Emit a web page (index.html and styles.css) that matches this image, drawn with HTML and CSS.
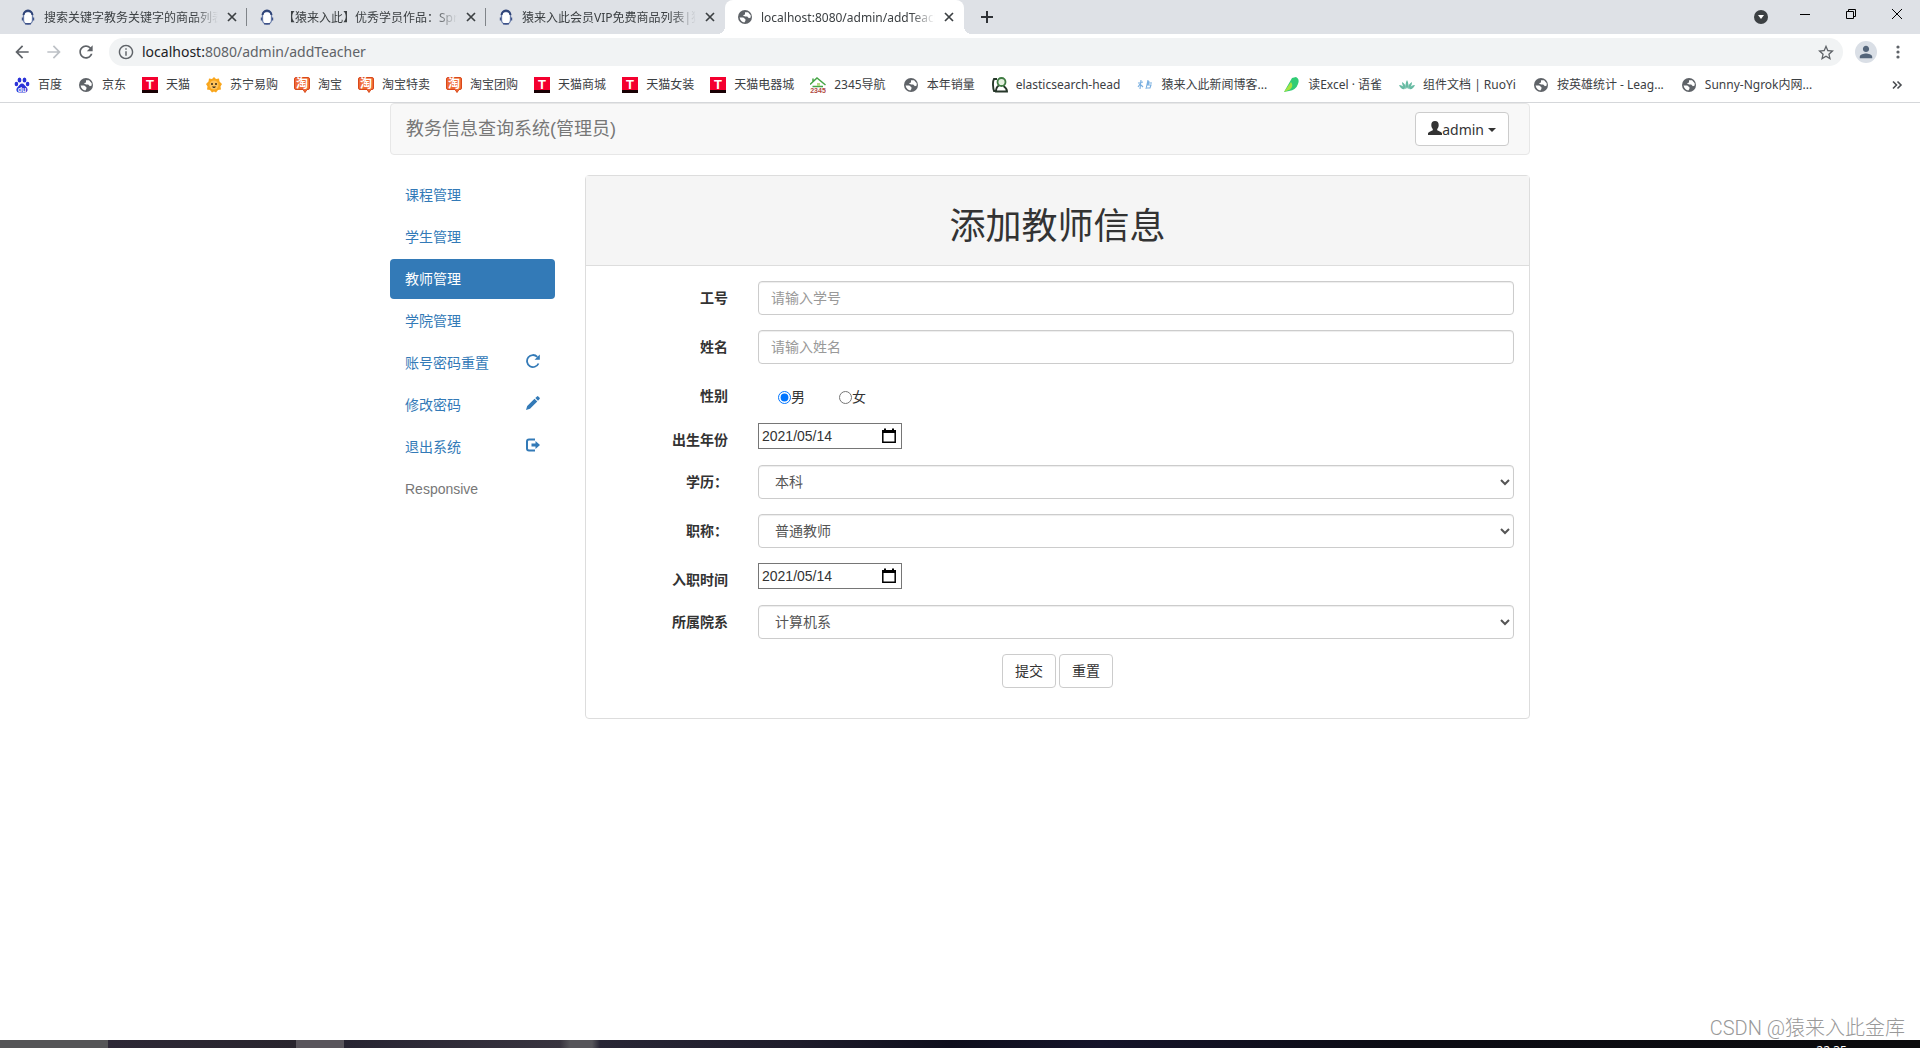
FILE: index.html
```html
<!DOCTYPE html>
<html lang="zh-CN">
<head>
<meta charset="utf-8">
<title>localhost:8080/admin/addTeacher</title>
<link rel="stylesheet" href="styles.css">
</head>
<body>
<svg class="sprite" aria-hidden="true">
  <symbol id="globe" viewBox="0 0 16 16"><circle cx="8" cy="8" r="8" fill="#5f6368"/><path d="M8 2.500h3.500l3 3.500v2.500l-2 1-2-2H8L5.500 6 8 5z" fill="#fff"/><path d="M1.800 8.500H6l2.500 2v1.800l-1.200 2Q3 13.500 1.800 8.500z" fill="#fff"/></symbol>
  <symbol id="ape" viewBox="0 0 16 16"><rect x="3.500" y="2.500" width="9" height="12.500" rx="4" fill="#fff" stroke="#6c7fab" stroke-width="1.300"/><path d="M3.500 6Q4 2 8 1.500 12 2 12.500 6" fill="none" stroke="#2f4478" stroke-width="2"/><path d="M2.500 8.500v3M13.500 8.500v3M5 14.800h6" stroke="#3f5389" stroke-width="1.400"/></symbol>
  <symbol id="close" viewBox="0 0 16 16"><path d="M4 4l8 8M12 4l-8 8" stroke="#3c4043" stroke-width="1.700"/></symbol>
  <symbol id="tmall" viewBox="0 0 16 16"><path d="M0 0h16v13H0z" fill="#f4002f"/><path d="M0 13h16v3H0z" fill="#180004"/><text x="8" y="11.500" text-anchor="middle" font-family="Liberation Sans" font-weight="bold" font-size="13" fill="#fff">T</text></symbol>
  <symbol id="taobao" viewBox="0 0 16 16"><path d="M2 .5h12q1.500 0 1.500 1.500v9q0 1.500-1.500 1.500h-1l-2 3-2-3H2Q.5 12.500.5 11V2Q.5.500 2 .500z" fill="#ef6a36" stroke="#d9481a"/><text x="8" y="11" text-anchor="middle" font-family="Noto Sans CJK SC" font-weight="bold" font-size="12" fill="#fff">淘</text></symbol>
  <symbol id="baidu" viewBox="0 0 16 16"><g fill="#2a32d8"><ellipse cx="5.500" cy="3" rx="1.900" ry="2.600"/><ellipse cx="10.500" cy="3" rx="1.900" ry="2.600"/><ellipse cx="2.400" cy="7" rx="1.800" ry="2.300"/><ellipse cx="13.600" cy="7" rx="1.800" ry="2.300"/><path d="M8 6.500c2 0 2.600 2 4.200 3.500 2.400 2 1.400 5.500-1.200 5.500H5c-2.600 0-3.600-3.500-1.200-5.500C5.400 8.500 6 6.500 8 6.500z"/></g><text x="8" y="14.500" text-anchor="middle" font-family="Liberation Sans" font-weight="bold" font-size="7" fill="#fff">du</text></symbol>
  <symbol id="suning" viewBox="0 0 16 16"><path d="M8 0l2 2 3-.5.500 3L16 7l-1.500 2.500.5 3-3 .5-2 2.500L8 14.500 6 15.500 4 13l-3-.5.500-3L0 7l2.500-2.500.5-3L6 2z" fill="#f9a61c"/><circle cx="8" cy="8" r="4.500" fill="#ffc35a"/><circle cx="6" cy="7" r="1" fill="#352719"/><circle cx="10" cy="7" r="1" fill="#352719"/><path d="M6 9.500q2 3 4 0z" fill="#352719"/></symbol>
  <symbol id="house" viewBox="0 0 16 16"><path d="M0 7.500L7 1l8.500 7M3 1.500v3M2.500 9.500H13" fill="none" stroke="#45a545" stroke-width="1.500"/><path d="M7 6h3v3H7z" fill="#b8dc87"/><text x="8" y="15.800" text-anchor="middle" font-family="Liberation Sans" font-weight="bold" font-size="7" fill="#b04a43">2345</text></symbol>
  <symbol id="elastic" viewBox="0 0 16 16"><path d="M5 2H2Q.8 4 1 8t1 6h2M7 8.500Q4 10 4 14.500h11q0-3-3.500-5.500" fill="none" stroke="#26372a" stroke-width="1.900"/><circle cx="9.500" cy="5" r="4" fill="#e3f0df" stroke="#3f7c42" stroke-width="1.800"/></symbol>
  <symbol id="script" viewBox="0 0 16 16"><path d="M1 6l5-1M4 3L3 12m0-5L1 10m3-2l2 2M9 12l2-9m-1 3h5M12 4l-1 4h3l-1 3h-3" fill="none" stroke="#77aee0" stroke-width="1.100"/></symbol>
  <symbol id="yuque" viewBox="0 0 16 16"><path d="M8 1l4-1q4 2 2 7-2 6-9 7l-5 1z" fill="#31cc75"/><path d="M7 5q3 4-1 7.500L0 15z" fill="#a6e342"/></symbol>
  <symbol id="lotus" viewBox="0 0 16 16"><path d="M8 12Q5 8 8 3q3 5 0 9zM7 12Q3 10 3 5q4 2 4 7zm2 0q4-2 4-7-4 2-4 7zM6 12q-4 1-6-4 4 0 6 4zm4 0q4 1 6-4-4 0-6 4z" fill="#67bba3"/></symbol>
  <symbol id="calendar" viewBox="0 0 14 16"><path d="M.8 3h12.400v11.200H.8z" fill="none" stroke="#000" stroke-width="1.500"/><path d="M0 2h14v3H0zM2 .5h2V3H2zm8 0h2V3h-2z"/></symbol>
</svg>

<header class="browser">
  <div class="tabs" role="tablist">
    <div class="tab" role="tab"><svg class="icon"><use href="#ape"/></svg><span class="tab-title">搜索关键字教务关键字的商品列表</span><button class="tab-close" aria-label="关闭"><svg class="icon"><use href="#close"/></svg></button></div>
    <div class="tab" role="tab"><svg class="icon"><use href="#ape"/></svg><span class="tab-title">【猿来入此】优秀学员作品<span class="colon">：</span>Spring</span><button class="tab-close" aria-label="关闭"><svg class="icon"><use href="#close"/></svg></button></div>
    <div class="tab" role="tab"><svg class="icon"><use href="#ape"/></svg><span class="tab-title">猿来入此会员VIP免费商品列表|猿来</span><button class="tab-close" aria-label="关闭"><svg class="icon"><use href="#close"/></svg></button></div>
    <div class="tab active" role="tab" aria-selected="true"><svg class="icon globe"><use href="#globe"/></svg><span class="tab-title">localhost:8080/admin/addTeacher</span><button class="tab-close" aria-label="关闭"><svg class="icon"><use href="#close"/></svg></button></div>
    <button class="new-tab" aria-label="新标签页"><svg class="icon" viewBox="0 0 16 16"><path d="M8 2v12M2 8h12" stroke="#2f3236" stroke-width="2"/></svg></button>
    <div class="window-controls">
      <button class="tab-search" aria-label="搜索标签页"><svg class="icon" viewBox="0 0 16 16"><circle cx="8" cy="8" r="7" fill="#3c4043"/><path d="M5 6h6l-3 4z" fill="#fff"/></svg></button>
      <button class="window-button" aria-label="最小化"><svg class="icon" viewBox="0 0 16 16"><path d="M3 8.500h10" stroke="#000"/></svg></button>
      <button class="window-button" aria-label="还原"><svg class="icon" viewBox="0 0 16 16"><path d="M3.500 5.500h7v7h-7zM5.500 5V3.500h7v7H11" fill="none" stroke="#000"/></svg></button>
      <button class="window-button" aria-label="关闭窗口"><svg class="icon" viewBox="0 0 16 16"><path d="M3 3l10 10M13 3L3 13" stroke="#000"/></svg></button>
    </div>
  </div>
  <div class="toolbar">
    <button class="tool" aria-label="后退"><svg viewBox="0 0 24 24"><path d="M20 11H7.830l5.590-5.590L12 4l-8 8 8 8 1.410-1.410L7.830 13H20v-2z" fill="#5f6368"/></svg></button>
    <button class="tool" aria-label="前进"><svg viewBox="0 0 24 24"><path d="M12 4l-1.410 1.410L16.170 11H4v2h12.170l-5.580 5.590L12 20l8-8z" fill="#bdc1c6"/></svg></button>
    <button class="tool" aria-label="重新加载"><svg viewBox="0 0 24 24"><path d="M17.650 6.350C16.200 4.900 14.210 4 12 4c-4.420 0-7.990 3.580-7.990 8s3.570 8 7.990 8c3.730 0 6.840-2.550 7.730-6h-2.080c-.82 2.330-3.040 4-5.650 4-3.310 0-6-2.690-6-6s2.690-6 6-6c1.660 0 3.140.69 4.220 1.780L13 11h7V4l-2.350 2.350z" fill="#5f6368"/></svg></button>
    <div class="address">
      <svg class="icon" viewBox="1 1 22 22"><path d="M11 7h2v2h-2zm0 4h2v6h-2zm1-9C6.480 2 2 6.480 2 12s4.480 10 10 10 10-4.480 10-10S17.520 2 12 2zm0 18c-4.410 0-8-3.590-8-8s3.590-8 8-8 8 3.590 8 8-3.590 8-8 8z" fill="#5f6368"/></svg>
      <span class="url"><span class="host">localhost:</span>8080/admin/addTeacher</span>
      <button class="star" aria-label="添加书签"><svg class="icon" viewBox="2 1 20 20"><path d="M22 9.240l-7.190-.62L12 2 9.190 8.630 2 9.240l5.460 4.730L5.820 21 12 17.270 18.180 21l-1.630-7.030L22 9.240zM12 15.400l-3.760 2.270 1-4.280-3.320-2.880 4.380-.38L12 6.100l1.710 4.040 4.380.38-3.320 2.880 1 4.280L12 15.400z" fill="#5f6368"/></svg></button>
    </div>
    <button class="avatar" aria-label="用户"><svg class="icon" viewBox="3 3 18 18"><path d="M12 12c2.210 0 4-1.790 4-4s-1.790-4-4-4-4 1.790-4 4 1.790 4 4 4zm0 2c-2.670 0-8 1.340-8 4v2h16v-2c0-2.660-5.330-4-8-4z" fill="#54657a"/></svg></button>
    <button class="menu" aria-label="菜单"><svg class="icon" viewBox="0 0 16 16"><g fill="#5f6368"><circle cx="8" cy="3" r="1.600"/><circle cx="8" cy="8" r="1.600"/><circle cx="8" cy="13" r="1.600"/></g></svg></button>
  </div>
  <nav class="bookmarks" aria-label="书签">
    <a href="#"><svg class="icon"><use href="#baidu"/></svg>百度</a>
    <a href="#"><svg class="icon globe"><use href="#globe"/></svg>京东</a>
    <a href="#"><svg class="icon"><use href="#tmall"/></svg>天猫</a>
    <a href="#"><svg class="icon"><use href="#suning"/></svg>苏宁易购</a>
    <a href="#"><svg class="icon"><use href="#taobao"/></svg>淘宝</a>
    <a href="#"><svg class="icon"><use href="#taobao"/></svg>淘宝特卖</a>
    <a href="#"><svg class="icon"><use href="#taobao"/></svg>淘宝团购</a>
    <a href="#"><svg class="icon"><use href="#tmall"/></svg>天猫商城</a>
    <a href="#"><svg class="icon"><use href="#tmall"/></svg>天猫女装</a>
    <a href="#"><svg class="icon"><use href="#tmall"/></svg>天猫电器城</a>
    <a href="#"><svg class="icon"><use href="#house"/></svg>2345导航</a>
    <a href="#"><svg class="icon globe"><use href="#globe"/></svg>本年销量</a>
    <a href="#"><svg class="icon"><use href="#elastic"/></svg>elasticsearch-head</a>
    <a href="#"><svg class="icon"><use href="#script"/></svg>猿来入此新闻博客...</a>
    <a href="#"><svg class="icon"><use href="#yuque"/></svg>读Excel · 语雀</a>
    <a href="#"><svg class="icon"><use href="#lotus"/></svg>组件文档 | RuoYi</a>
    <a href="#"><svg class="icon globe"><use href="#globe"/></svg>按英雄统计 - Leag...</a>
    <a href="#"><svg class="icon globe"><use href="#globe"/></svg>Sunny-Ngrok内网...</a>
    <button class="more" aria-label="更多书签"><svg class="icon" viewBox="0 0 16 16"><path d="M4 4.500L7.500 8 4 11.500M8.500 4.500L12 8l-3.500 3.500" fill="none" stroke="#4a4d51" stroke-width="1.600"/></svg></button>
  </nav>
</header>

<div class="container">
  <div class="navbar">
    <a class="brand" href="#">教务信息查询系统(管理员)</a>
    <button class="btn user"><svg class="glyph" viewBox="0 0 14 14"><path d="M7 0c2.500 0 3.700 1.500 3.700 4 0 1.800-.6 3-1.500 4v1.200c1 .8 4.300 1.500 4.800 3V14H0v-1.800c.5-1.500 3.800-2.200 4.800-3V8c-.9-1-1.500-2.200-1.500-4C3.300 1.500 4.500 0 7 0z" fill="#333"/></svg>admin<span class="caret"></span></button>
  </div>
  <div class="columns">
    <nav class="side">
      <a href="#">课程管理</a>
      <a href="#">学生管理</a>
      <a class="current" href="#">教师管理</a>
      <a href="#">学院管理</a>
      <a href="#">账号密码重置<svg class="glyph" viewBox="0 0 14 14"><path d="M12.500 9.500A6 6 0 1 1 11.300 2.800" fill="none" stroke="#337ab7" stroke-width="1.800"/><path d="M13.800.5v5.200H8.600z" fill="#337ab7"/></svg></a>
      <a href="#">修改密码<svg class="glyph" viewBox="0 0 14 14"><path d="M0 14l1.200-4L8.500 2.700l2.800 2.800L4 12.800zM9.300 2L11 .4q.6-.6 1.300 0l1.300 1.300q.6.6 0 1.300L12 4.700z" fill="#337ab7"/></svg></a>
      <a href="#">退出系统<svg class="glyph" viewBox="0 0 14 14"><path d="M9 1.500H3Q1 1.500 1 3.500v7q0 2 2 2h6" fill="none" stroke="#337ab7" stroke-width="2"/><path d="M5.500 5.500h4V3l4.500 4-4.500 4V8.500h-4z" fill="#337ab7"/></svg></a>
      <a class="disabled" href="#">Responsive</a>
    </nav>
    <main class="panel">
      <div class="panel-heading"><h1>添加教师信息</h1></div>
      <form class="panel-body">
        <div class="row"><label for="no">工号</label><input class="control" id="no" type="text" placeholder="请输入学号"></div>
        <div class="row"><label for="name">姓名</label><input class="control" id="name" type="text" placeholder="请输入姓名"></div>
        <div class="row gender"><span class="label" id="sex">性别</span>
          <div class="radios" role="radiogroup" aria-labelledby="sex"><label class="radio"><input type="radio" name="sex" checked>男</label><label class="radio"><input type="radio" name="sex">女</label></div>
        </div>
        <div class="row"><label for="birth">出生年份</label><div class="date"><input id="birth" type="text" value="2021/05/14"><button type="button" aria-label="选择日期"><svg><use href="#calendar"/></svg></button></div></div>
        <div class="row"><label for="degree">学历<span class="colon">：</span></label><select class="control" id="degree"><option>本科</option></select></div>
        <div class="row"><label for="rank">职称<span class="colon">：</span></label><select class="control" id="rank"><option>普通教师</option></select></div>
        <div class="row"><label for="hired">入职时间</label><div class="date"><input id="hired" type="text" value="2021/05/14"><button type="button" aria-label="选择日期"><svg><use href="#calendar"/></svg></button></div></div>
        <div class="row"><label for="college">所属院系</label><select class="control" id="college"><option>计算机系</option></select></div>
        <div class="actions"><button class="btn" type="submit">提交</button><button class="btn" type="reset">重置</button></div>
      </form>
    </main>
  </div>
</div>

<footer class="taskbar"><span class="clock">22:35</span></footer>
<div class="watermark">CSDN @猿来入此金库</div>
</body>
</html>
```
FILE: styles.css
```css
* { box-sizing: border-box; }
body {
  margin: 0;
  min-height: 100vh;
  display: flex;
  flex-direction: column;
  position: relative;
  background: #fff;
  color: #333;
  font: 14px/20px "Liberation Sans", "Noto Sans CJK SC", sans-serif;
}
a { text-decoration: none; color: #337ab7; }
button { font: inherit; color: inherit; padding: 0; border: 0; background: none; }
.sprite { position: absolute; width: 0; height: 0; }
.icon { display: block; width: 16px; height: 16px; flex: none; }
.icon.globe { padding: 1px; }
/* full-width colon centred in its cell */
.colon { font-family: "Noto Sans CJK TC", sans-serif; line-height: 1; }

/* browser frame */
.browser {
  border-bottom: 1px solid #d5d7da;
  font: 12px/16px "Noto Sans", "Noto Sans CJK SC", sans-serif;
  color: #3c4043;
}
.tabs { display: flex; height: 34px; padding-left: 8px; background: #dee1e6; }
.tab {
  position: relative;
  display: flex;
  align-items: center;
  width: 239px;
  padding: 0 7px 0 12px;
}
.tab::after { content: ""; position: absolute; right: 0; top: 8px; width: 1px; height: 18px; background: #808489; }
.tab:nth-child(3)::after { display: none; }
.tab-title {
  flex: 1;
  min-width: 0;
  margin: 0 6px 0 8px;
  padding-top: 1px;
  overflow: hidden;
  white-space: nowrap;
  mask-image: linear-gradient(to left, transparent, #000 24px);
}
.tab.active { background: #fff; border-radius: 8px 8px 0 0; }
.tab.active::before, .tab.active::after { content: ""; position: absolute; top: auto; bottom: 0; width: 8px; height: 8px; }
.tab.active::before { left: -8px; background: radial-gradient(circle at 0 0, #dee1e6 8px, #fff 8px); }
.tab.active::after { right: -8px; background: radial-gradient(circle at 100% 0, #dee1e6 8px, #fff 8px); }
.new-tab { margin-left: 15px; }
.window-controls { display: flex; margin-left: auto; }
.tab-search { margin-right: 13px; }
.window-button { display: grid; justify-items: center; align-content: center; width: 46px; height: 28px; }
.toolbar { display: flex; align-items: center; height: 36px; padding: 0 14px 0 6px; }
.tool { width: 32px; display: grid; place-items: center; }
.tool svg { width: 20px; height: 20px; }
.address {
  flex: 1;
  display: flex;
  align-items: center;
  height: 28px;
  margin-left: 7px;
  padding: 0 9px;
  border-radius: 14px;
  background: #f1f3f4;
}
.url { flex: 1; margin-left: 8px; font-size: 14px; line-height: 20px; color: #5f6368; }
.host { color: #202124; }
.avatar { display: grid; place-items: center; width: 22px; height: 22px; margin: 0 13px 0 12px; border-radius: 50%; background: #dadfe6; }
.avatar .icon { width: 14px; height: 14px; }
.bookmarks { display: flex; align-items: center; gap: 16px; height: 32px; padding: 0 15px 3px 14px; white-space: nowrap; }
.bookmarks a { display: flex; align-items: center; gap: 8px; color: #3c4043; }
.bookmarks a:nth-child(n+11) { margin-right: 1px; }
.more { margin-left: auto; }

/* page */
.container { width: 100%; max-width: 1170px; flex: 1; margin: 0 auto; padding: 0 15px; }
.navbar {
  display: flex;
  justify-content: space-between;
  align-items: center;
  height: 52px;
  margin-bottom: 20px;
  padding: 0 20px 0 15px;
  border: 1px solid #e7e7e7;
  border-radius: 4px;
  background: #f8f8f8;
}
.brand { font-size: 18px; color: #777; }
.btn { height: 34px; padding: 0 12px; border: 1px solid #ccc; border-radius: 4px; background: #fff; color: #333; }
.user { display: flex; align-items: center; padding-top: 2px; font-family: "Noto Sans", sans-serif; }
.glyph { width: 14px; height: 14px; flex: none; margin-bottom: 4px; }
.caret { margin-left: 4px; border: 4px solid transparent; border-top-color: #333; border-bottom: 0; }
.columns { display: flex; gap: 30px; align-items: flex-start; }
.side { display: flex; flex-direction: column; gap: 2px; width: 165px; }
.side a { display: flex; justify-content: space-between; align-items: center; height: 40px; padding: 0 15px; border-radius: 4px; }
.side .current { background: #337ab7; color: #fff; }
.side .disabled { color: #777; }
.panel { flex: 1; border: 1px solid #ddd; border-radius: 4px; }
.panel-heading { padding: 31px 15px 18px; border-bottom: 1px solid #ddd; background: #f5f5f5; }
h1 { margin: 0; font-size: 36px; line-height: 40px; font-weight: 400; text-align: center; }
.panel-body { display: flex; flex-direction: column; gap: 15px; padding: 15px 15px 30px; }
.row { display: flex; align-items: flex-start; gap: 30px; }
.row > label, .label { width: 127px; padding-top: 7px; text-align: right; font-weight: 700; }
.control {
  flex: 1;
  height: 34px;
  padding: 6px 12px;
  border: 1px solid #ccc;
  border-radius: 4px;
  background: #fff;
  box-shadow: inset 0 1px 1px rgba(0, 0, 0, .075);
  color: #555;
  font: inherit;
}
.control::placeholder { color: #999; }
.gender { height: 29px; }
.radios { display: flex; gap: 14px; padding-top: 8px; }
.radio { display: flex; align-items: center; padding-left: 20px; }
.radio input { width: 13px; height: 13px; margin: 0; }
.date { display: flex; align-items: center; width: 144px; height: 26px; margin-bottom: 1px; padding: 0 5px 0 3px; border: 1px solid #767676; }
.date input { flex: 1; min-width: 0; padding: 0; border: 0; outline: 0; background: none; font: inherit; color: #333; }
.date svg { display: block; width: 14px; height: 16px; }
.actions { display: flex; justify-content: center; gap: 3px; }

.taskbar {
  height: 8px;
  padding-right: 73px;
  overflow: hidden;
  text-align: right;
  background: linear-gradient(90deg, #555557 0 108px, #2d2836 108px, #29252e 296px, #59555c 296px 344px, #272432 344px, #38343f 560px, #56555a 570px 592px, #282635 600px, #1e1c2b 800px, #0e0e1c 950px, #15142a 1100px, #0c0c14 1400px, #0b0b0d);
}
.clock { display: block; margin-top: 3px; font: 12px/16px "Noto Sans", sans-serif; color: #fff; }
.watermark { position: absolute; right: 15px; bottom: 8px; font: 300 20px/24px Roboto, "Noto Sans CJK SC", sans-serif; color: #999; text-shadow: 1px 1px 0 #fff; }
```
